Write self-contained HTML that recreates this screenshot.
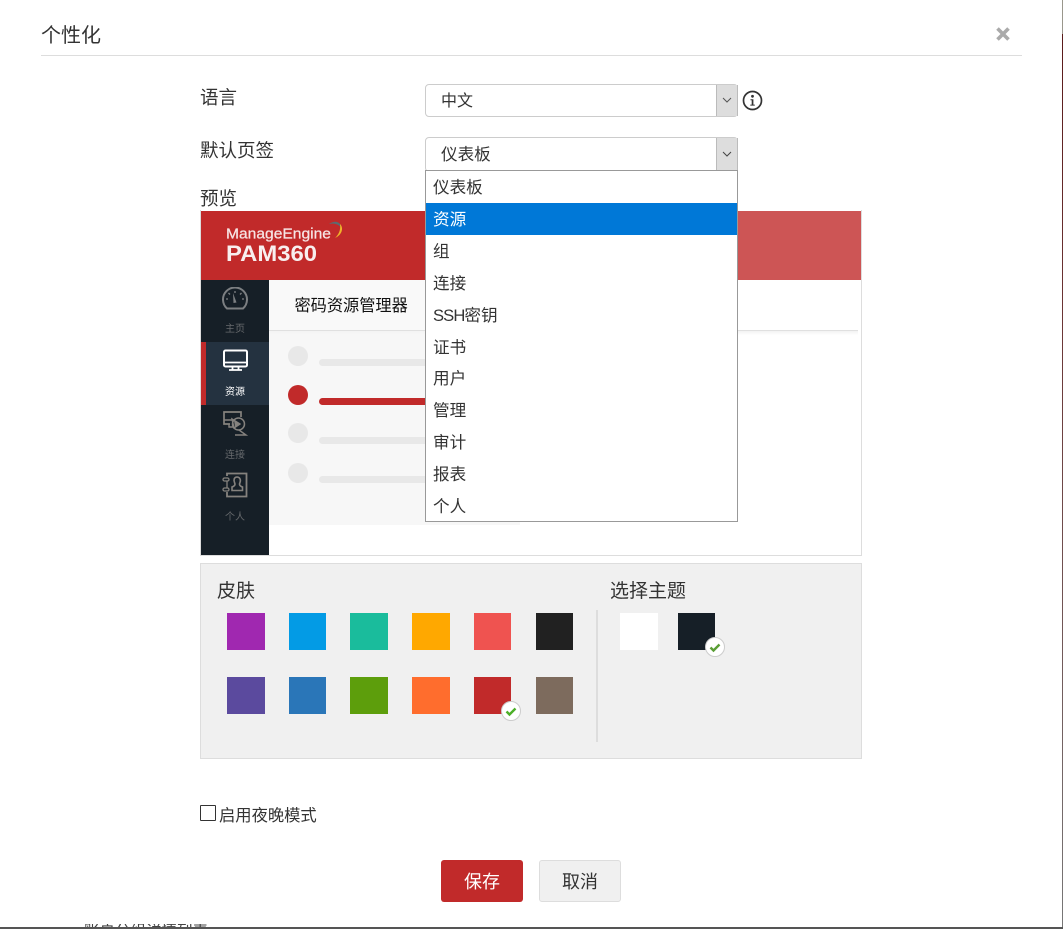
<!DOCTYPE html>
<html><head><meta charset="utf-8">
<style>
html,body{margin:0;padding:0;background:#fff;}
body{position:relative;width:1063px;height:929px;overflow:hidden;font-family:"Liberation Sans","Noto Sans CJK SC",sans-serif;color:#333;}
.a{position:absolute;white-space:nowrap;}
.t{line-height:24px;height:24px;}
.sw{position:absolute;width:38px;height:37px;}
.sel{position:absolute;left:425px;width:311px;border:1px solid #ccc;border-radius:4px;background:#fff;}
.arr{position:absolute;left:716px;width:20px;background:#ddd;border-left:1px solid #bbb;border-right:1px solid #bbb;}
.it{position:absolute;left:426px;width:311px;height:32px;line-height:34px;padding-left:7px;box-sizing:border-box;font-size:16.6px;color:#333;}
.lab{position:absolute;left:201px;width:68px;text-align:center;font-size:10px;line-height:14px;color:#66696c;}
.bar{position:absolute;left:319px;width:110px;height:7px;background:#e8e8e8;border-radius:4px;}
.dot{position:absolute;left:288px;width:20px;height:20px;border-radius:50%;background:#e8e8e8;}
</style></head><body>

<div class="a t" style="left:41px;top:24px;font-size:20px;">个性化</div>
<div class="a" style="left:41px;top:55px;width:981px;height:1px;background:#ddd;"></div>
<svg class="a" style="left:995px;top:26px" width="16" height="16" viewBox="0 0 16 16"><path d="M2.5 2.5L13.5 13.5M13.5 2.5L2.5 13.5" stroke="#aaa" stroke-width="3.6" fill="none"/></svg>
<div class="a" style="left:1062px;top:0;width:1px;height:34px;background:#9a978c;"></div>
<div class="a" style="left:1062px;top:34px;width:1px;height:893px;background:linear-gradient(#5a1a1a,#6b3434 30%,#777);"></div>
<div class="a" style="left:0;top:927px;width:1063px;height:2px;background:#555;"></div>

<div class="a t" style="left:200px;top:86px;font-size:18.5px;">语言</div>
<div class="a t" style="left:200px;top:139px;font-size:18.5px;">默认页签</div>
<div class="a t" style="left:200px;top:187px;font-size:18.5px;">预览</div>

<div class="sel" style="top:84px;height:31px;"></div>
<div class="a t" style="left:441px;top:90px;font-size:16px;">中文</div>
<div class="arr" style="top:85px;height:31px;"></div>
<svg class="a" style="left:721px;top:96px" width="12" height="8" viewBox="0 0 12 8"><path d="M2 2L6 6L10 2" stroke="#555" stroke-width="1" fill="none"/></svg>
<svg class="a" style="left:742px;top:90px" width="22" height="22" viewBox="0 0 22 22"><circle cx="10.5" cy="10.5" r="9" stroke="#333" stroke-width="1.7" fill="#fff"/><circle cx="10.5" cy="6.3" r="1.4" fill="#333"/><path d="M8.5 9.3H11.4V14.6H12.8V15.6H8.3V14.6H9.7V10.3H8.5Z" fill="#333"/></svg>

<div class="sel" style="top:137px;height:33px;"></div>
<div class="a t" style="left:441px;top:143px;font-size:16.6px;">仪表板</div>
<div class="arr" style="top:138px;height:32px;"></div>
<svg class="a" style="left:721px;top:150px" width="12" height="8" viewBox="0 0 12 8"><path d="M2 2L6 6L10 2" stroke="#444" stroke-width="1" fill="none"/></svg>

<!-- preview -->
<div class="a" style="left:200px;top:210px;width:660px;height:345px;border:1px solid #ddd;border-top:0;background:#fff;"></div>
<div class="a" style="left:201px;top:211px;width:537px;height:69px;background:#c12a2a;"></div>
<div class="a" style="left:738px;top:211px;width:123px;height:69px;background:#cd5555;"></div>
<svg class="a" style="left:220px;top:214px" width="130" height="56" viewBox="0 0 130 56">
<text x="6" y="24.5" font-family="'Liberation Sans',sans-serif" font-size="15" fill="#f6e4e4" stroke="#f6e4e4" stroke-width="0.25" textLength="105" lengthAdjust="spacingAndGlyphs">ManageEngine</text>
<text x="6" y="47" font-family="'Liberation Sans',sans-serif" font-size="22" font-weight="bold" fill="#f8efef" textLength="91" lengthAdjust="spacingAndGlyphs">PAM360</text>
<path d="M109 10C113 7 118 7 120 10C120.5 11 120.5 12 120.5 13C118 10 114 9 109 10Z" fill="#5d6b70"/>
<path d="M120 10C124 14 122 21 115 24C118 21 121 17 120 10Z" fill="#f0b429"/>
</svg>

<div class="a" style="left:201px;top:280px;width:68px;height:275px;background:#161f27;"></div>
<div class="a" style="left:201px;top:342px;width:68px;height:63px;background:#243240;"></div>
<div class="a" style="left:201px;top:342px;width:5px;height:63px;background:#c12a2a;"></div>

<svg class="a" style="left:221px;top:287px" width="28" height="24" viewBox="0 0 28 24"><path d="M6 21.5A12 12 0 1 1 22 21.5Z" stroke="#7c7f82" stroke-width="2" fill="none"/><path d="M12 6L15.5 15.5L12.5 16Z" fill="#7c7f82"/><path d="M14 4V6M5 12H7M21 12H23M7.5 6L9 7.5M20.5 6L19 7.5" stroke="#7c7f82" stroke-width="1.3"/></svg>
<div class="lab" style="top:323px;">主页</div>
<svg class="a" style="left:222px;top:349px" width="27" height="23" viewBox="0 0 27 23"><rect x="2" y="1.5" width="23" height="16" rx="1.5" stroke="#fff" stroke-width="2" fill="none"/><path d="M2 13.5H25" stroke="#fff" stroke-width="1.8"/><path d="M10.5 18V20.5M16.5 18V20.5M7 21H20" stroke="#fff" stroke-width="1.8"/></svg>
<div class="lab" style="top:386px;color:#fff;">资源</div>
<svg class="a" style="left:221px;top:409px" width="28" height="28" viewBox="0 0 28 28"><path d="M9 15H3V3H20V8" stroke="#85827e" stroke-width="1.7" fill="none"/><path d="M3 11H12M8 15V18H12" stroke="#85827e" stroke-width="1.4" fill="none"/><circle cx="17.5" cy="15" r="6" stroke="#85827e" stroke-width="1.5" fill="none"/><path d="M11 10L19 15L13 19ZM18 21L25 26H14" stroke="#85827e" stroke-width="1.4" fill="none"/><path d="M13 11L18 15L14 18Z" fill="#85827e"/></svg>
<div class="lab" style="top:449px;">连接</div>
<svg class="a" style="left:222px;top:472px" width="26" height="26" viewBox="0 0 26 26"><path d="M5 4V1.5H24.5V24.5H5V20" stroke="#85827e" stroke-width="1.8" fill="none"/><rect x="1" y="6" width="6" height="3" rx="1.5" stroke="#85827e" stroke-width="1.3" fill="none"/><rect x="1" y="16" width="6" height="3" rx="1.5" stroke="#85827e" stroke-width="1.3" fill="none"/><path d="M5 9V16" stroke="#85827e" stroke-width="1.3"/><path d="M15 5C12 5 11.5 8 12.5 10.5C13.5 12.5 13 14 10 15V18.5H20.5V15C17.5 14 17 12.5 18 10.5C19 8 18 5 15 5Z" stroke="#85827e" stroke-width="1.6" fill="none"/></svg>
<div class="lab" style="top:511px;">个人</div>

<div class="a" style="left:269px;top:280px;width:251px;height:245px;background:#f7f7f7;"></div>
<div class="a" style="left:269px;top:280px;width:469px;height:50px;background:#f9f9f9;"></div>
<div class="a" style="left:738px;top:280px;width:122px;height:50px;background:#fff;"></div>
<div class="a" style="left:269px;top:330px;width:589px;height:1px;background:#e0e0e0;"></div>
<div class="a" style="left:269px;top:331px;width:589px;height:4px;background:linear-gradient(#f3f3f3,rgba(247,247,247,0));"></div>
<div class="a t" style="left:294.5px;top:294px;font-size:16.2px;color:#111;">密码资源管理器</div>
<div class="dot" style="top:346px;"></div><div class="bar" style="top:359px;"></div>
<div class="dot" style="top:385px;background:#c12a2a;"></div><div class="bar" style="top:398px;background:#c12a2a;"></div>
<div class="dot" style="top:423px;"></div><div class="bar" style="top:437px;"></div>
<div class="dot" style="top:463px;"></div><div class="bar" style="top:476px;"></div>

<!-- dropdown -->
<div class="a" style="left:425px;top:170px;width:311px;height:350px;border:1px solid #999;background:#fff;"></div>
<div class="it" style="top:171px;">仪表板</div>
<div class="it" style="top:203px;background:#0078d7;color:#fff;">资源</div>
<div class="it" style="top:235px;">组</div>
<div class="it" style="top:267px;">连接</div>
<div class="it" style="top:299px;"><span style="letter-spacing:-0.9px;">SSH</span>密钥</div>
<div class="it" style="top:331px;">证书</div>
<div class="it" style="top:362px;">用户</div>
<div class="it" style="top:394px;">管理</div>
<div class="it" style="top:426px;">审计</div>
<div class="it" style="top:458px;">报表</div>
<div class="it" style="top:490px;">个人</div>

<!-- skin panel -->
<div class="a" style="left:200px;top:563px;width:660px;height:194px;background:#f0f0f0;border:1px solid #ddd;"></div>
<div class="a t" style="left:217px;top:580px;font-size:19px;">皮肤</div>
<div class="a t" style="left:610px;top:580px;font-size:19px;">选择主题</div>
<div class="a" style="left:596px;top:610px;width:2px;height:132px;background:#ddd;"></div>

<div class="sw" style="left:227px;top:613px;background:#a028b0;"></div>
<div class="sw" style="left:289px;top:613px;width:37px;background:#039be5;"></div>
<div class="sw" style="left:350px;top:613px;background:#1abc9c;"></div>
<div class="sw" style="left:412px;top:613px;background:#ffa800;"></div>
<div class="sw" style="left:474px;top:613px;width:37px;background:#ef5350;"></div>
<div class="sw" style="left:536px;top:613px;width:37px;background:#212121;"></div>
<div class="sw" style="left:227px;top:677px;background:#5b4a9e;"></div>
<div class="sw" style="left:289px;top:677px;width:37px;background:#2a76b8;"></div>
<div class="sw" style="left:350px;top:677px;background:#5d9e0c;"></div>
<div class="sw" style="left:412px;top:677px;background:#ff6d2d;"></div>
<div class="sw" style="left:474px;top:677px;width:37px;background:#c12a2a;"></div>
<div class="sw" style="left:536px;top:677px;width:37px;background:#7d6b5d;"></div>
<div class="sw" style="left:620px;top:613px;background:#fff;"></div>
<div class="sw" style="left:678px;top:613px;width:37px;background:#161f27;"></div>

<svg class="a" style="left:500px;top:700px" width="22" height="22" viewBox="0 0 22 22"><circle cx="11" cy="11" r="9.5" fill="#fff" stroke="#ccc"/><path d="M6.5 11.5L9.5 14.5L15.5 8.5" stroke="#4caf28" stroke-width="2.4" fill="none"/></svg>
<svg class="a" style="left:704px;top:636px" width="22" height="22" viewBox="0 0 22 22"><circle cx="11" cy="11" r="9.5" fill="#fff" stroke="#ccc"/><path d="M6.5 11.5L9.5 14.5L15.5 8.5" stroke="#5a9e35" stroke-width="2.4" fill="none"/></svg>

<div class="a" style="left:200px;top:805px;width:14px;height:14px;border:1px solid #333;border-radius:1px;background:#fff;"></div>
<div class="a t" style="left:219px;top:804px;font-size:16.3px;">启用夜晚模式</div>

<div class="a" style="left:441px;top:860px;width:82px;height:42px;line-height:44px;background:#c12a2a;border-radius:3px;color:#fff;text-align:center;font-size:18px;">保存</div>
<div class="a" style="left:539px;top:860px;width:80px;height:40px;line-height:43px;background:#f0f0f0;border:1px solid #ddd;border-radius:3px;color:#333;text-align:center;font-size:18px;">取消</div>

<div class="a" style="left:84px;top:924px;height:3px;overflow:hidden;font-size:15.5px;line-height:16px;color:#444;">账户分组详情列表</div>
</body></html>
